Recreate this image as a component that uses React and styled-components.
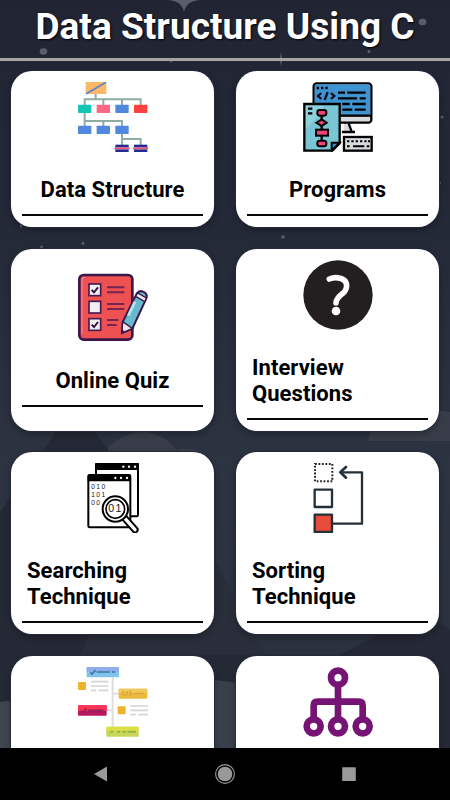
import React from "react";
import styled, { createGlobalStyle } from "styled-components";

const GlobalStyle = createGlobalStyle`
  * {
    box-sizing: border-box;
  }
  body {
    margin: 0;
    background: #000;
    font-family: Roboto, "Liberation Sans", sans-serif;
  }
`;

// icons, all drawn on a 210 x 210 grid
const DataStructureIcon = () => (
  <Icon viewBox="0 0 210 210">
    <path
      d="M53 36V52M20 70V52H188V70M76 52V70M132 52V70M20 93V132M20 117H132V132M76 117V132M132 155V190M132 171H188V190"
      fill="none" stroke="#8eada6" strokeWidth="6"
    />
    <rect x="23" y="0" width="62" height="36" fill="#fbb868" />
    <path d="M25 35L84 1" stroke="#5485d8" strokeWidth="5" />
    <rect x="0" y="68" width="40" height="25" rx="2" fill="#13c4b7" />
    <rect x="56" y="68" width="40" height="25" rx="2" fill="#fa6884" />
    <rect x="112" y="68" width="40" height="25" rx="2" fill="#5087df" />
    <rect x="168" y="68" width="40" height="25" rx="2" fill="#ff423e" />
    {[0, 56, 112].map((x) => (
      <rect key={x} x={x} y="131" width="40" height="25" rx="2" fill="#5087df" />
    ))}
    {[112, 168].map((x) => (
      <g key={x}>
        <rect x={x} y="188" width="40" height="22" fill="#252b8f" />
        <path d={`M${x - 2} 199h44`} stroke="#a68bc0" strokeWidth="8" />
        <path d={`M${x - 2} 199h44`} stroke="#f8507b" strokeWidth="4" />
      </g>
    ))}
  </Icon>
);

const ProgramsIcon = () => (
  <Icon viewBox="0 0 210 210">
    <path d="M135 122L143 150H122V122Z" fill="#d8dbde" />
    <path d="M117 150H156M137 124L146 149" stroke="#000" strokeWidth="7" />
    <rect x="32" y="4" width="173" height="118" rx="9" fill="#d8dbde" stroke="#000" strokeWidth="7" />
    <path d="M35 101V13Q35 7 41 7H196Q202 7 202 13V101Z" fill="#3e93d0" />
    <path d="M112 101H206" stroke="#000" strokeWidth="7" />
    <path d="M41 18h7M54 18h7M67 18h7M105 32H126M133 32H188M105 49H162M170 49H188M118 66H140M148 66H188M118 83H148M155 83H188" stroke="#000" strokeWidth="7" />
    <path d="M55 33L45 42L55 51M84 33L94 42L84 51M74 30L65 54" fill="none" stroke="#160f22" strokeWidth="7" />
    <path d="M4 66H110V184L88 206H4Z" fill="#79c5d3" />
    <path d="M6 69H60V85L6 145Z" fill="#8dd1dd" />
    <path d="M4 66H110V184L88 206H4Z" fill="none" stroke="#000" strokeWidth="7" />
    <path d="M86 206V182H110Z" fill="#398ec8" stroke="#000" strokeWidth="6" />
    <path d="M15 80H28M15 94H28M56 84V186" stroke="#000" strokeWidth="7" />
    <rect x="43" y="84" width="27" height="17" rx="7" fill="#ee437b" stroke="#000" strokeWidth="6" />
    <path d="M56 112L71 122L56 132L40 122Z" fill="#ee437b" stroke="#000" strokeWidth="6" />
    <rect x="39" y="143" width="36" height="18" fill="#ee437b" stroke="#000" strokeWidth="6" />
    <rect x="43" y="176" width="27" height="17" rx="7" fill="#ee437b" stroke="#000" strokeWidth="6" />
    <rect x="123" y="165" width="83" height="41" fill="#d8dbde" stroke="#000" strokeWidth="7" />
    <path d="M132 178h7M145 178h7M158 178h7M171 178h7M184 178h7M195 178h6M132 193h8M150 193h34M191 193h8" stroke="#000" strokeWidth="6" />
  </Icon>
);

const QuizIcon = () => (
  <Icon viewBox="0 0 210 210">
    <rect x="4" y="6" width="159" height="194" rx="13" fill="#ed5152" stroke="#3c164b" strokeWidth="8" />
    <path d="M12 183V22Q12 13 21 13" fill="none" stroke="#f58082" strokeWidth="4" />
    {[33, 85, 137].map((y) => (
      <rect key={y} x="33" y={y} width="35" height="35" fill="#f1edf0" stroke="#4a1c52" strokeWidth="5" />
    ))}
    <path d="M41 51L48 58L60 43M41 155L48 162L60 147" fill="none" stroke="#34133f" strokeWidth="6" />
    <path d="M87 43H139M87 58H139M87 93H139M87 108H139M87 141H121M87 156H116" stroke="#76254e" strokeWidth="6" />
    <path d="M176 62Q184 51 195 56Q210 62 205 76L163 167L132 180L134 147Z" fill="#68b9cc" stroke="#3c164b" strokeWidth="6" />
    <path d="M134 146L163 166L132 180Z" fill="#f1e7e8" stroke="#3c164b" strokeWidth="4" />
    <path d="M173 70L200 86L205 75L179 60Z" fill="#eee9ef" stroke="#3c164b" strokeWidth="4" />
    <path d="M171 86L151 128" stroke="#b8e4ed" strokeWidth="8" />
    <path d="M130 181L133 170L141 176Z" fill="#3c164b" />
  </Icon>
);

const QuestionIcon = () => (
  <Icon viewBox="0 0 210 210">
    <circle cx="105" cy="105" r="104" fill="#231f20" />
    <path d="M79 57Q96 50 112 55C137 62 135 88 118 101C105 112 99 119 99 128" fill="none" stroke="#fff" strokeWidth="17" strokeLinecap="round" />
    <circle cx="99" cy="153" r="13" fill="#fff" />
  </Icon>
);

const SearchingIcon = () => (
  <Icon viewBox="0 0 210 210">
    <rect x="54" y="2" width="126" height="158" rx="4" fill="#fff" stroke="#000" strokeWidth="6" />
    <path d="M52 0H182V21H52Z" />
    <rect x="31" y="36" width="126" height="157" rx="4" fill="#fff" stroke="#000" strokeWidth="6" />
    <path d="M29 55V39Q29 34 34 34H153Q158 34 158 39V55Z" />
    {[136, 153, 171].map((x) => <circle key={x} cx={x} cy="11" r="3.5" fill="#fff" />)}
    {[112, 129, 147].map((x) => <circle key={x} cx={x} cy="45" r="3.5" fill="#fff" />)}
    <Digits x="40" y="77">010</Digits>
    <Digits x="40" y="102">101</Digits>
    <Digits x="40" y="127">00</Digits>
    <path d="M138 163L171 200" stroke="#000" strokeWidth="22" strokeLinecap="round" />
    <path d="M138 163L171 200" stroke="#fff" strokeWidth="10" strokeLinecap="round" />
    <circle cx="112" cy="138" r="38" fill="#fff" stroke="#000" strokeWidth="6" />
    <circle cx="112" cy="138" r="28" fill="#fff" stroke="#000" strokeWidth="5" />
    <Digits x="91" y="148" $size={32}>01</Digits>
  </Icon>
);

const SortingIcon = () => (
  <Icon viewBox="0 0 210 210">
    <rect x="36" y="3" width="52" height="52" fill="none" stroke="#1c232b" strokeWidth="6" strokeDasharray="5.4 5" />
    <g fill="none" stroke="#263039" strokeWidth="7" strokeLinejoin="round">
      <rect x="35" y="80" width="52" height="52" />
      <rect x="35" y="155" width="52" height="52" fill="#e84c3d" />
      <path d="M89 182H177V28H114" />
      <path d="M129 12L112 28L129 44" strokeWidth="8" strokeLinecap="round" />
    </g>
  </Icon>
);

const FlowIcon = () => (
  <Icon viewBox="0 0 210 210">
    <path d="M104 31V180M104 80H124M84 130H104" fill="none" stroke="#dfdfe0" strokeWidth="6" />
    <path d="M39 44H91M39 57H91M39 70H55M62 70H91M157 117H210M157 130H210M157 143H173M181 143H210" stroke="#d4d4d5" strokeWidth="5" />
    <rect x="26" y="0" width="97" height="31" rx="3" fill="#80c3eb" />
    <path d="M26 15V3Q26 0 29 0H120Q123 0 123 3V15Z" fill="#8daeeb" />
    <path d="M37 16L42 21L53 9M56 15H96M102 15H111" fill="none" stroke="#3e74a5" strokeWidth="5" />
    <rect x="0" y="45" width="24" height="24" rx="3" fill="#edb32d" />
    <rect x="122" y="65" width="86" height="30" rx="3" fill="#ebba3d" />
    <path d="M122 78V68Q122 65 125 65H205Q208 65 208 68V78Z" fill="#f2c75b" />
    <path d="M139 72L132 79L139 86M154 72L161 79L154 86M149 72L144 86M168 79H199" fill="none" stroke="#dca13c" strokeWidth="4" />
    <rect x="0" y="115" width="86" height="31" rx="3" fill="#b91661" />
    <path d="M0 131V118Q0 115 3 115H83Q86 115 86 118V131Z" fill="#fe3454" />
    <path d="M10 131L15 136L26 124M31 130H76" fill="none" stroke="#8e235b" strokeWidth="5" />
    <rect x="119" y="118" width="24" height="24" rx="3" fill="#edb32d" />
    <rect x="85" y="179" width="97" height="30" rx="3" fill="#c8d657" />
    <path d="M85 192V182Q85 179 88 179H179Q182 179 182 182V192Z" fill="#dae045" />
    <path d="M97 194H106M117 194H126M133 194H144M148 194H174" stroke="#9ab347" strokeWidth="6" />
  </Icon>
);

const TreeIcon = () => (
  <Icon viewBox="0 0 210 210">
    <g fill="none" stroke="#751474" strokeWidth="20">
      <path d="M105 52V158M32 158V116Q32 104 44 104H167Q179 104 179 116V158" />
      {[[105, 32], [32, 178], [105, 178], [179, 178]].map(([x, y]) => (
        <circle key={`${x}-${y}`} cx={x} cy={y} r="21" />
      ))}
    </g>
  </Icon>
);

const topics = [
  { name: "Data Structure", icon: DataStructureIcon },
  { name: "Programs", icon: ProgramsIcon },
  { name: "Online Quiz", icon: QuizIcon },
  { name: "Interview Questions", icon: QuestionIcon },
  { name: "Searching Technique", icon: SearchingIcon },
  { name: "Sorting Technique", icon: SortingIcon },
  { name: "", icon: FlowIcon },
  { name: "", icon: TreeIcon },
];

const NightSky = () => (
  <Scenery viewBox="0 0 450 748">
    <defs>
      <linearGradient id="sky" x1="0" y1="0" x2="0" y2="1">
        <stop offset="0" stopColor="#212433" />
        <stop offset="0.3" stopColor="#242938" />
        <stop offset="0.62" stopColor="#2c3341" />
        <stop offset="1" stopColor="#2a303e" />
      </linearGradient>
    </defs>
    <rect width="450" height="748" fill="url(#sky)" />
    <g fill="#5b5e69">
      <path d="M168 0Q182 1 184 12Q186 1 200 0Z" />
      <path d="M281 52L282 58L288 60L282 61L281 66L280 61L274 60L280 58Z" />
      <ellipse cx="43.5" cy="51.5" rx="3.8" ry="3.2" />
      <ellipse cx="422.5" cy="22" rx="3.8" ry="3.2" />
      <circle cx="369" cy="51.5" r="1.5" />
      <circle cx="171" cy="61" r="1.3" />
      <circle cx="442" cy="117" r="1.5" />
      <circle cx="283" cy="237" r="1.8" />
      <circle cx="83" cy="243.5" r="1.4" />
      <circle cx="41.5" cy="247" r="1.4" />
      <circle cx="440" cy="183" r="1" />
      <path d="M21 222L22 226L21 229L20 226Z" />
    </g>
    <path d="M102 455Q119 432 145 432Q165 434 176 450Q193 446 205 455Z" fill="#383d49" />
    <path d="M368 441L373 424Q410 404 450 412V441Z" fill="#383d49" />
    <path d="M0 512L75 405L215 594L260 655V748H0Z" fill="#252935" />
    <path d="M80 655L105 600L215 560L265 655Z" fill="#292e3a" />
    <path d="M340 655L425 610L450 630V748H330Z" fill="#252935" />
    <path d="M0 702Q18 697 40 715V748H0Z" fill="#414550" />
    <path d="M205 679L240 683V748H205Z" fill="#3a404b" />
  </Scenery>
);

export default function App() {
  return (
    <Screen>
      <GlobalStyle />
      <Content>
        <NightSky />
        <Header>
          <Title>Data Structure Using C</Title>
        </Header>
        <TopicGrid>
          {topics.map(({ name, icon: TopicIcon }, index) => (
            <Card key={index}>
              <TopicIcon />
              <Label>{name}</Label>
              <Rule />
            </Card>
          ))}
        </TopicGrid>
      </Content>
      <NavBar>
        <NavIcon viewBox="0 0 24 24">
          <path d="M5 12L18 4.5V19.5Z" />
        </NavIcon>
        <NavIcon viewBox="0 0 24 24">
          <circle cx="12" cy="12" r="7.3" />
          <circle cx="12" cy="12" r="9.4" fill="none" stroke="#999" strokeWidth="1.1" />
        </NavIcon>
        <NavIcon viewBox="0 0 24 24">
          <rect x="5.2" y="5.2" width="13.6" height="13.8" rx="0.5" />
        </NavIcon>
      </NavBar>
    </Screen>
  );
}

const Screen = styled.div`
  display: flex;
  flex-direction: column;
  width: 450px;
  height: 800px;
  overflow: hidden;
`;

const Content = styled.main`
  position: relative;
  z-index: 0;
  flex: 1;
  min-height: 0;
  overflow: hidden;
`;

// sits behind the header and the cards
const Scenery = styled.svg`
  position: absolute;
  inset: 0;
  z-index: -1;
  width: 450px;
  height: 748px;
`;

const Header = styled.header`
  height: 61px;
  padding-top: 4px;
  border-bottom: 3px solid #a5a4a2;
`;

const Title = styled.h1`
  margin: 0;
  color: #fff;
  font-size: 37px;
  font-weight: 700;
  line-height: 45px;
  letter-spacing: 0.04px;
  text-align: center;
  white-space: nowrap;
  text-shadow: 1px 1px 2px #000;
`;

const TopicGrid = styled.div`
  display: grid;
  grid-template-columns: 203px 203px;
  grid-template-rows: 156px 182px 182px 156px;
  gap: 21.5px 22px;
  padding: 10px 11px;
`;

const Card = styled.section`
  display: flex;
  flex-direction: column;
  align-items: center;
  justify-content: center;
  border-radius: 21px;
  background: #fff;
  box-shadow: 0 0 0 1px #242a3a, 0 3px 7px rgba(0, 0, 0, 0.3);
`;

const Icon = styled.svg`
  flex: none;
  width: 70px;
  height: 70px;
`;

const Digits = styled.text`
  fill: #222;
  font-family: "Liberation Sans", sans-serif;
  font-size: ${({ $size = 20 }) => $size}px;
  letter-spacing: 4px;
`;

const Label = styled.h2`
  max-width: 171px;
  min-height: 26px;
  margin: 25px 0 11px;
  color: #000;
  font-size: 22px;
  font-weight: 700;
  line-height: 26px;
  letter-spacing: 0.06px;
`;

const Rule = styled.div`
  width: 181px;
  height: 2px;
  background: #080808;
`;

const NavBar = styled.nav`
  display: flex;
  justify-content: space-between;
  height: 52px;
  padding: 13.5px 89px;
  background: #000;
`;

const NavIcon = styled.svg`
  width: 24px;
  height: 24px;
  fill: #999;
`;
